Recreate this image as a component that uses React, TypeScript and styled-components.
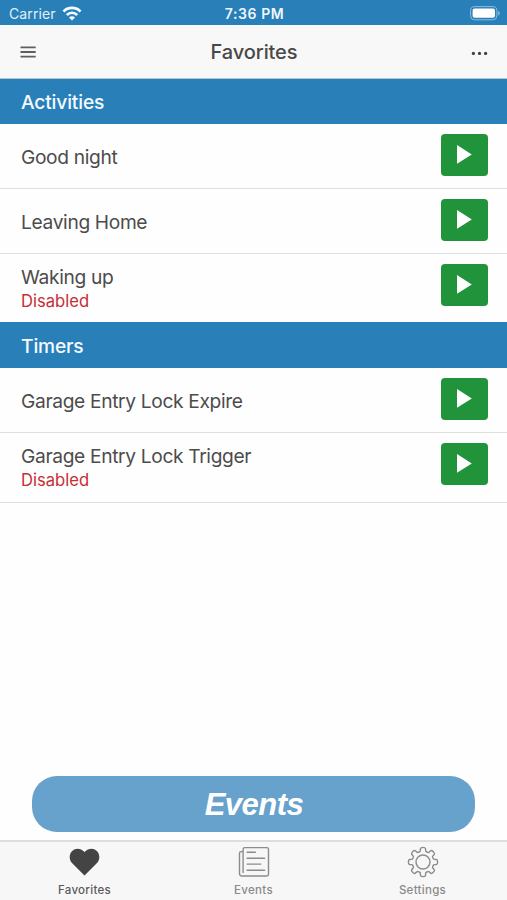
import React from "react";
import styled, { createGlobalStyle } from "styled-components";

const Global = createGlobalStyle`
  * { box-sizing: border-box; }
  body { margin: 0; background: #fff; font-family: Inter, "Liberation Sans", sans-serif; color: #4a4a4a; }
`;

const BLUE = "#2980b9";

const Screen = styled.div`
  width: 507px;
  height: 900px;
  display: flex;
  flex-direction: column;
  background: #fefefe;
  overflow: hidden;
`;

const StatusBar = styled.header`
  height: 25px;
  flex: none;
  display: grid;
  grid-template-columns: 1fr auto 1fr;
  align-items: center;
  padding: 2px 7px 0 9px;
  background: ${BLUE};
  color: #fff;
  svg { display: block; }
`;

const Carrier = styled.div`
  display: flex;
  align-items: center;
  gap: 6px;
  font-size: 14px;
  line-height: 20px;
  letter-spacing: 0.1px;
  color: #e3eff8;
`;

const Clock = styled.div`
  font-size: 14px;
  font-weight: 600;
  line-height: 20px;
  letter-spacing: 0.6px;
  color: #eef6fc;
`;

const Battery = styled.div`
  justify-self: end;
`;

const NavBar = styled.nav`
  height: 54px;
  flex: none;
  display: grid;
  grid-template-columns: 1fr auto 1fr;
  align-items: center;
  padding: 0 19px 0 20px;
  background: #f8f8f8;
  border-bottom: 1px solid #b5c6d2;
  svg { display: block; }
  svg:last-child { justify-self: end; }
`;

const NavTitle = styled.h1`
  margin: 0;
  padding-top: 1px;
  font-size: 20px;
  font-weight: 500;
  line-height: 26px;
  letter-spacing: -0.1px;
  color: #484848;
`;

const SectionTitle = styled.h2<{ $height: number }>`
  margin: 0;
  height: ${(p) => p.$height}px;
  flex: none;
  display: flex;
  align-items: center;
  padding: 1px 0 0 21px;
  background: ${BLUE};
  color: #f4faff;
  font-size: 19.2px;
  font-weight: 500;
  letter-spacing: -0.15px;
`;

const Row = styled.div<{ $height: number; $last?: boolean }>`
  height: ${(p) => p.$height}px;
  flex: none;
  display: flex;
  justify-content: space-between;
  align-items: flex-start;
  padding: 10px 19px 0 21px;
  border-bottom: ${(p) => (p.$last ? "none" : "1.5px solid #e0e0e0")};
`;

const Labels = styled.div<{ $double?: boolean }>`
  padding-top: ${(p) => (p.$double ? 1 : 11)}px;
`;

const Name = styled.div`
  font-size: 19.2px;
  line-height: 25px;
  letter-spacing: -0.35px;
  color: #4c4c4c;
`;

const Disabled = styled.div`
  font-size: 16.6px;
  line-height: 22px;
  color: #c62f36;
`;

const PlayButton = styled.button`
  width: 47px;
  height: 42px;
  display: flex;
  align-items: center;
  justify-content: center;
  border: 0;
  border-radius: 4px;
  padding: 0 1px 2px 0;
  background: #21933b;
  svg { display: block; }
`;

const Spacer = styled.div`
  flex: 1;
`;

const EventsButton = styled.button`
  height: 56px;
  flex: none;
  margin: 0 32px 8px;
  padding: 2px 0 0 1px;
  border: 0;
  border-radius: 25px;
  background: #67a2cc;
  color: #fff;
  font: italic 700 31px/54px "Liberation Sans", sans-serif;
  letter-spacing: -0.5px;
`;

const TabBar = styled.footer`
  height: 60px;
  flex: none;
  display: grid;
  grid-template-columns: 85px 1fr 85px;
  padding: 0 42px;
  background: #f7f7f7;
  border-top: 2px solid #dedede;
`;

const Tab = styled.button<{ $active?: boolean }>`
  display: flex;
  flex-direction: column;
  align-items: center;
  gap: 4px;
  padding: 4px 0 0;
  border: 0;
  background: none;
  color: ${(p) => (p.$active ? "#5a5a5a" : "#8a8a8a")};
  font: 500 11.5px/16px Inter, "Liberation Sans", sans-serif;
  letter-spacing: 0.3px;
  svg { display: block; flex: none; }
`;

const Wifi = () => (
  <svg width="20" height="16" viewBox="0 0 20 16" fill="none" stroke="#f4faff" strokeWidth="2.7">
    <path d="M1.5 5.6 C6 0.7 14 0.7 18.5 5.6" />
    <path d="M4.8 9 C7.7 6 12.3 6 15.2 9" />
    <path d="M10 14.4 L7 11.5 C8.7 9.9 11.3 9.9 13 11.5 Z" fill="#f4faff" stroke="none" />
  </svg>
);

const BatteryIcon = () => (
  <svg width="30" height="15" viewBox="0 0 30 15">
    <rect x="0.6" y="0.6" width="26.3" height="13.2" rx="4" fill="none" stroke="#8dbcdd" strokeWidth="1" />
    <rect x="2.6" y="2.6" width="22.4" height="9.2" rx="2" fill="#fff" />
    <path d="M28.2 4.9 C30.2 5.7 30.2 8.7 28.2 9.5 Z" fill="#8dbcdd" />
  </svg>
);

const MenuIcon = () => (
  <svg width="16" height="14" viewBox="0 0 16 14" stroke="#625d5e" strokeWidth="1.8">
    <path d="M0.5 2.3H15.7M0.5 7H15.7M0.5 11.7H15.7" />
  </svg>
);

const MoreIcon = () => (
  <svg width="17" height="6" viewBox="0 0 17 6" fill="#3f3f3f">
    <circle cx="2.4" cy="4.4" r="1.6" />
    <circle cx="8.5" cy="4.4" r="1.6" />
    <circle cx="14.6" cy="4.4" r="1.6" />
  </svg>
);

const PlayIcon = () => (
  <svg width="15" height="19" viewBox="0 0 15 19" fill="#fff">
    <path d="M0 0 L14.8 9.4 L0 18.8 Z" />
  </svg>
);

const Heart = () => (
  <svg width="31" height="32" viewBox="0 0 31 32">
    <path
      d="M15.5 29.4 L3 17.1 C-0.1 13.8 0 8.3 2.9 5.2 C6.3 1.7 11.8 1.9 15 5.6 L15.5 6.2 L16 5.6 C19.2 1.9 24.7 1.7 28.1 5.2 C31 8.3 31.1 13.8 28 17.1 Z"
      fill="#444"
    />
  </svg>
);

const News = () => (
  <svg width="32" height="32" viewBox="0 0 32 32" fill="none" stroke="#8c8c8c" strokeWidth="1.4" strokeLinejoin="round" strokeLinecap="round">
    <path d="M5.1 26.5 V3.3 Q5.1 1.6 6.8 1.6 H28.8 Q30.5 1.6 30.5 3.3 V28.3 Q30.5 30 28.8 30 H4.1 Q1.5 30 1.5 27.4 V7.2 Q1.5 5.6 3.1 5.6 H5.1" />
    <path d="M9.1 6.2H17.4M9.1 12.2H26.6M9.1 18.1H22.8M9.1 24.2H26.6" />
  </svg>
);

const GEAR_TOOTH: [number, number][] = [
  [-2.6, -10.6], [-2.7, -12.6], [-2.2, -14.6], [2.2, -14.6], [2.7, -12.6], [2.6, -10.6], [4.1, -9.9],
];

const gearPath = () => {
  const pts: [number, number][] = [];
  for (let i = 0; i < 8; i++) {
    const a = (i * Math.PI) / 4;
    GEAR_TOOTH.forEach(([x, y]) =>
      pts.push([x * Math.cos(a) - y * Math.sin(a), x * Math.sin(a) + y * Math.cos(a)])
    );
  }
  const mid = (a: [number, number], b: [number, number]) =>
    `${((a[0] + b[0]) / 2).toFixed(2)} ${((a[1] + b[1]) / 2).toFixed(2)}`;
  const n = pts.length;
  return (
    `M${mid(pts[n - 1], pts[0])}` +
    pts.map((p, i) => `Q${p[0].toFixed(2)} ${p[1].toFixed(2)} ${mid(p, pts[(i + 1) % n])}`).join("") +
    "Z"
  );
};

const Gear = () => (
  <svg width="32" height="32" viewBox="-16 -16 32 32" fill="none" stroke="#8c8c8c" strokeWidth="1.4" strokeLinejoin="round">
    <path d={gearPath()} />
    <circle r="7" />
  </svg>
);

type Item = { name: string; height: number; disabled?: boolean; last?: boolean };

const sections: { title: string; height: number; items: Item[] }[] = [
  {
    title: "Activities",
    height: 45,
    items: [
      { name: "Good night", height: 65 },
      { name: "Leaving Home", height: 65 },
      { name: "Waking up", height: 68, disabled: true, last: true },
    ],
  },
  {
    title: "Timers",
    height: 46,
    items: [
      { name: "Garage Entry Lock Expire", height: 65 },
      { name: "Garage Entry Lock Trigger", height: 70, disabled: true },
    ],
  },
];

export default function App() {
  return (
    <>
      <Global />
      <Screen>
        <StatusBar>
          <Carrier>
            <span>Carrier</span>
            <Wifi />
          </Carrier>
          <Clock>7:36 PM</Clock>
          <Battery>
            <BatteryIcon />
          </Battery>
        </StatusBar>
        <NavBar>
          <MenuIcon />
          <NavTitle>Favorites</NavTitle>
          <MoreIcon />
        </NavBar>
        {sections.map((s) => (
          <React.Fragment key={s.title}>
            <SectionTitle $height={s.height}>{s.title}</SectionTitle>
            {s.items.map((it) => (
              <Row key={it.name} $height={it.height} $last={it.last}>
                <Labels $double={it.disabled}>
                  <Name>{it.name}</Name>
                  {it.disabled && <Disabled>Disabled</Disabled>}
                </Labels>
                <PlayButton aria-label={`Run ${it.name}`}>
                  <PlayIcon />
                </PlayButton>
              </Row>
            ))}
          </React.Fragment>
        ))}
        <Spacer />
        <EventsButton>Events</EventsButton>
        <TabBar>
          <Tab $active>
            <Heart />
            Favorites
          </Tab>
          <Tab>
            <News />
            Events
          </Tab>
          <Tab>
            <Gear />
            Settings
          </Tab>
        </TabBar>
      </Screen>
    </>
  );
}
